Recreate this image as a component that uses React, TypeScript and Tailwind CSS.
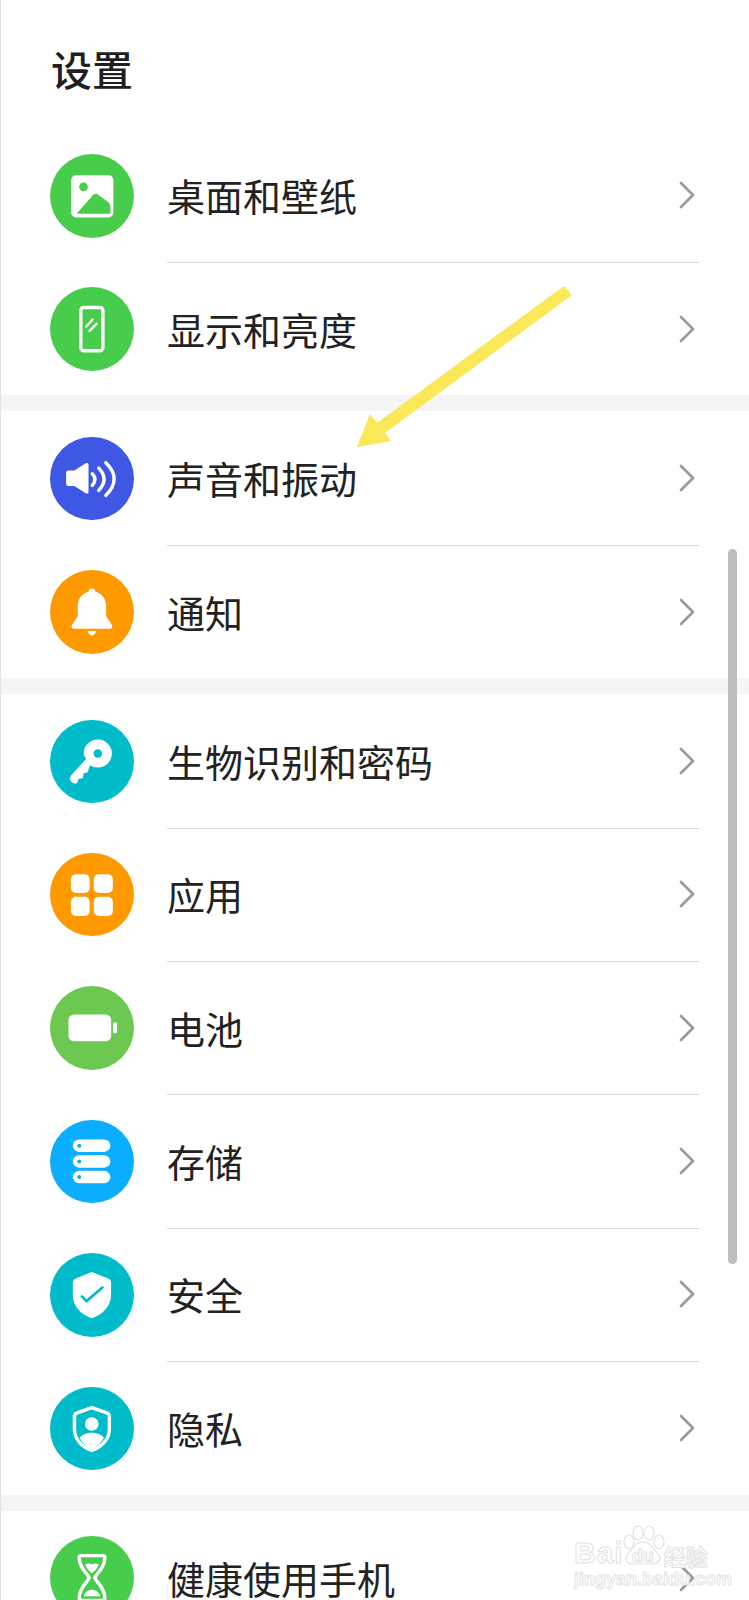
import type { ReactNode } from 'react'

const GREEN = '#47cd4b'
const TEAL = '#00bccb'
const BLUE = '#0baeff'

function IconSvg({ children }: { children: ReactNode }) {
  return (
    <svg viewBox="0 0 83 83" className="h-full w-full">
      {children}
    </svg>
  )
}

const ImageIcon = () => (
  <IconSvg>
    <rect x="21" y="21" width="42" height="42" rx="5" fill="#fff" />
    <circle cx="33.3" cy="32.7" r="4.3" fill={GREEN} />
    <path d="M26.5 59.5 L42.5 41 Q45 38.5 48 40.5 L58 48 Q60 50 60 53 V59.5 Z" fill={GREEN} />
  </IconSvg>
)

const PhoneIcon = () => (
  <IconSvg>
    <rect x="30.6" y="20.3" width="22" height="43" rx="3" fill="none" stroke="#fff" strokeWidth="3.4" />
    <path d="M35.5 40 L43 31.5 M38.5 44.5 L47 36" stroke="#fff" strokeWidth="2.4" fill="none" />
  </IconSvg>
)

const SoundIcon = () => (
  <IconSvg>
    <path d="M16 35.5 q0 -2.2 2.2 -2.2 h6 L35.5 26.2 q2.8 -1.4 2.8 1.4 V54.4 q0 2.8 -2.8 1.4 L24.2 48.6 h-6 q-2.2 0 -2.2 -2.2 Z" fill="#fff" />
    <g fill="none" stroke="#fff" strokeWidth="3.4" strokeLinecap="round">
      <path d="M42 36.5 Q47.5 42 42 48" />
      <path d="M48.5 31 Q59 42 48.5 53" />
      <path d="M55.5 25.5 Q72 41.5 55.5 58" />
    </g>
  </IconSvg>
)

const BellIcon = () => (
  <IconSvg>
    <path d="M41.7 18.5 a3.4 3.4 0 0 1 3.4 3.2 C52 23.5 55.8 29 55.8 36 V46 L61.5 54.5 Q63 58.3 60 58.3 H23.4 Q20.4 58.3 21.9 54.5 L27.6 46 V36 C27.6 29 31.4 23.5 38.3 21.7 a3.4 3.4 0 0 1 3.4 -3.2 Z" fill="#fff" />
    <path d="M37.3 60.7 H46 Q44.5 65 41.7 65 Q38.8 65 37.3 60.7 Z" fill="#fff" />
  </IconSvg>
)

const KeyIcon = () => (
  <IconSvg>
    <path d="M33.5 33 A14 14 0 1 1 47.5 47.3 Q43 47.3 39.5 45 L37.5 52 L33.5 53 L32.5 58 L28.5 58.5 L27 62.5 Q24 64 21.5 62 L20 59.5 Q19.5 56.5 21.5 54.5 L36 38.5 Q33.5 36 33.5 33 Z" fill="#fff" />
    <circle cx="47.5" cy="33.3" r="4.2" fill={TEAL} />
  </IconSvg>
)

const AppsIcon = () => (
  <IconSvg>
    <rect x="20.8" y="21" width="18.6" height="18.8" rx="5" fill="#fff" />
    <rect x="43.5" y="21" width="19" height="18.8" rx="5" fill="#fff" />
    <rect x="20.8" y="43.6" width="18.6" height="19" rx="5" fill="#fff" />
    <rect x="43.5" y="43.6" width="19" height="19" rx="5" fill="#fff" />
  </IconSvg>
)

const BatteryIcon = () => (
  <IconSvg>
    <rect x="18.4" y="28.3" width="42.4" height="26.7" rx="5.5" fill="#fff" />
    <rect x="62.7" y="36" width="4" height="11" rx="1.6" fill="#fff" />
  </IconSvg>
)

const StorageIcon = () => (
  <IconSvg>
    <rect x="22.7" y="19.3" width="37.3" height="12.4" rx="6.2" fill="#fff" />
    <rect x="22.7" y="35" width="37.3" height="12.4" rx="6.2" fill="#fff" />
    <rect x="22.7" y="50.5" width="37.3" height="12.4" rx="6.2" fill="#fff" />
    <circle cx="29" cy="25.5" r="2" fill={BLUE} />
    <circle cx="29" cy="41.2" r="2" fill={BLUE} />
    <circle cx="29" cy="56.7" r="2" fill={BLUE} />
  </IconSvg>
)

const ShieldIcon = () => (
  <IconSvg>
    <path d="M41.5 19 L58.5 25.5 Q60.7 26.5 60.7 29 V42 C60.7 53 52 61.5 41.5 64.8 C31 61.5 22.7 53 22.7 42 V29 Q22.7 26.5 25 25.5 Z" fill="#fff" />
    <path d="M31 42.3 L36.3 47.8 L53 33.5" fill="none" stroke={TEAL} strokeWidth="2.6" />
  </IconSvg>
)

const PrivacyIcon = () => (
  <IconSvg>
    <path d="M41.5 20.5 L57 26 Q59 27 59 29 V42 C59 52 51 60 41.5 63 C32 60 24.3 52 24.3 42 V29 Q24.3 27 26.3 26 Z" fill="none" stroke="#fff" strokeWidth="3.4" />
    <circle cx="41.5" cy="36.8" r="6.8" fill="#fff" />
    <path d="M29.5 50.5 C32 47 36.5 45.5 41.5 45.5 C46.5 45.5 51 47 53.5 50.5 C50.5 56.5 46 60 41.5 62 C37 60 32.5 56.5 29.5 50.5 Z" fill="#fff" />
  </IconSvg>
)

const HourglassIcon = () => (
  <IconSvg>
    <path d="M31 19.5 H52.5 Q54.5 19.5 54.5 21.5 C54.5 32 47 36 44.5 41.5 C47 47 54.5 51 54.5 62 Q54.5 64 52.5 64 H31 Q29 64 29 62 C29 51 36.5 47 39 41.5 C36.5 36 29 32 29 21.5 Q29 19.5 31 19.5 Z" fill="none" stroke="#fff" strokeWidth="3.4" strokeLinejoin="round" />
    <path d="M35 28 Q38 26.5 41.5 28 Q45 26.5 48.5 28 Q47 33 41.5 37 Q36.5 33 35 28 Z" fill="#fff" />
    <path d="M33.5 60 Q35 54 41.5 53.5 Q48.5 54 50 60 Z" fill="#fff" />
  </IconSvg>
)

const sections = [
  [
    { label: '桌面和壁纸', color: 'bg-[#47cd4b]', icon: <ImageIcon /> },
    { label: '显示和亮度', color: 'bg-[#47cd4b]', icon: <PhoneIcon /> },
  ],
  [
    { label: '声音和振动', color: 'bg-[#3f57e5]', icon: <SoundIcon /> },
    { label: '通知', color: 'bg-[#ff9900]', icon: <BellIcon /> },
  ],
  [
    { label: '生物识别和密码', color: 'bg-[#00bccb]', icon: <KeyIcon /> },
    { label: '应用', color: 'bg-[#ff9900]', icon: <AppsIcon /> },
    { label: '电池', color: 'bg-[#6cc851]', icon: <BatteryIcon /> },
    { label: '存储', color: 'bg-[#0baeff]', icon: <StorageIcon /> },
    { label: '安全', color: 'bg-[#00bccb]', icon: <ShieldIcon /> },
    { label: '隐私', color: 'bg-[#00bccb]', icon: <PrivacyIcon /> },
  ],
  [{ label: '健康使用手机', color: 'bg-[#47cd4b]', icon: <HourglassIcon /> }],
]

function Row({ label, color, icon, last }: { label: string; color: string; icon: ReactNode; last: boolean }) {
  return (
    <div className="flex h-[133.4px] items-center pl-[49px] pr-[50px]">
      <div className={`mt-[1px] h-[83.5px] w-[83.5px] shrink-0 rounded-full ${color}`}>{icon}</div>
      <div className={`ml-[33.5px] flex h-[134.4px] flex-1 items-center justify-between self-start pr-[4px] ${last ? '' : 'border-b border-[#d9d9d9]'}`}>
        <span className="text-[38px] leading-none text-[#222222]">{label}</span>
        <svg viewBox="0 0 16 28" className="h-[28px] w-[16px]" fill="none" stroke="#9b9b9b" strokeWidth="2.8" strokeLinecap="round" strokeLinejoin="round">
          <path d="M2 2 L14 14 L2 26" />
        </svg>
      </div>
    </div>
  )
}

export default function App() {
  return (
    <div className="relative h-[1600px] w-[749px] overflow-hidden border-l border-[#e2e2e2] bg-white font-['Noto_Sans_CJK_SC','Noto_Sans',sans-serif]">
      <div className="flex h-[128.6px] items-start pl-[50px] pt-[48px]">
        <h1 className="text-[41px] font-medium leading-none text-[#1f1f1f]">设置</h1>
      </div>

      {sections.map((items, i) => (
        <div key={i}>
          {i > 0 && <div className="h-4 bg-[#f5f5f5]" />}
          {items.map((item, j) => (
            <Row key={item.label} {...item} last={j === items.length - 1} />
          ))}
        </div>
      ))}

      {/* scrollbar */}
      <div className="absolute left-[727px] top-[549px] h-[715px] w-[9px] rounded-full bg-[#bdbdbd]" />

      {/* annotation arrow drawn over the screenshot */}
      <svg className="absolute left-0 top-0" width="749" height="1600" viewBox="0 0 749 1600">
        <path d="M563 286 L571 295 L384 433 L390 441 L356 447 L369 414 L376 423 Z" fill="#f9e857" />
      </svg>

      {/* watermark */}
      <div className="absolute left-[573px] top-[1525px] w-[140px] text-white">
        <svg className="absolute left-[44px] top-0" width="50" height="42" viewBox="0 0 50 42" fill="#fff" stroke="#e2e2e2" strokeWidth="1.2">
          <ellipse cx="11" cy="17" rx="5" ry="7" />
          <ellipse cx="20" cy="8" rx="5" ry="7" />
          <ellipse cx="31" cy="8" rx="5" ry="7" />
          <ellipse cx="41" cy="17" rx="5" ry="7" />
          <path d="M25 17 C33 17 35 24 40 29 C44 34 41 39 33 39 H16 C8 39 6 34 10 29 C15 24 17 17 25 17 Z" />
        </svg>
        <div className="relative flex items-end pt-[13px]">
          <span className="font-['Liberation_Sans',sans-serif] text-[30px] font-bold leading-none tracking-[1px] [-webkit-text-stroke:1px_#e2e2e2]">Bai</span>
          <span className="ml-[8px] font-['Liberation_Sans',sans-serif] text-[18px] font-bold leading-[24px] [-webkit-text-stroke:1px_#e2e2e2]">du</span>
          <span className="ml-[10px] text-[22px] font-bold leading-[26px] [-webkit-text-stroke:1px_#e2e2e2]">经验</span>
        </div>
        <div className="mt-[1px] font-['Liberation_Sans',sans-serif] text-[18px] font-bold leading-[20px] [-webkit-text-stroke:1px_#e6e6e6]">jingyan.baidu.com</div>
      </div>
    </div>
  )
}
